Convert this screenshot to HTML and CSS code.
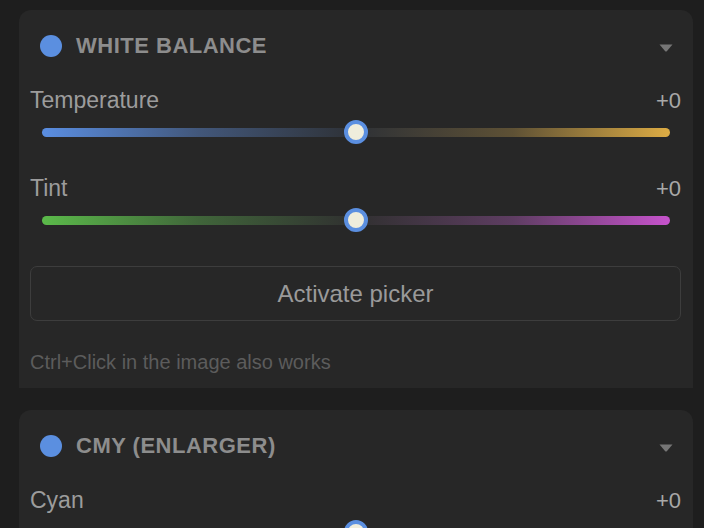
FILE: index.html
```html
<!DOCTYPE html>
<html lang="en">
<head>
<meta charset="utf-8">
<title>Adjustments</title>
<link rel="stylesheet" href="styles.css">
</head>
<body>
<div class="panel">
  <section class="card">
    <header class="card-head">
      <span class="dot"></span>
      <h2 class="card-title">WHITE BALANCE</h2>
      <svg class="chevron" width="14" height="8" viewBox="0 0 14 8"><path d="M0.5 0.5 H13.5 L7.8 7.2 Q7 8 6.2 7.2 Z" fill="#767676"/></svg>
    </header>
    <div class="field">
      <div class="field-row"><span class="label">Temperature</span><span class="value">+0</span></div>
      <div class="slider"><div class="track temp"><span class="thumb"></span></div></div>
    </div>
    <div class="field">
      <div class="field-row"><span class="label">Tint</span><span class="value">+0</span></div>
      <div class="slider"><div class="track tint"><span class="thumb"></span></div></div>
    </div>
    <button class="picker" type="button">Activate picker</button>
    <p class="hint">Ctrl+Click in the image also works</p>
  </section>
  <section class="card">
    <header class="card-head">
      <span class="dot"></span>
      <h2 class="card-title">CMY (ENLARGER)</h2>
      <svg class="chevron" width="14" height="8" viewBox="0 0 14 8"><path d="M0.5 0.5 H13.5 L7.8 7.2 Q7 8 6.2 7.2 Z" fill="#767676"/></svg>
    </header>
    <div class="field">
      <div class="field-row"><span class="label">Cyan</span><span class="value">+0</span></div>
      <div class="slider"><div class="track cyan"><span class="thumb"></span></div></div>
    </div>
  </section>
</div>
</body>
</html>
```
FILE: styles.css
```css
html, body {
  margin: 0;
  height: 100%;
  overflow: hidden;
}

body {
  background: #1e1e1e;
  font-family: "Liberation Sans", Arial, Helvetica, sans-serif;
}

.panel {
  display: flex;
  flex-direction: column;
  gap: 22px;
  padding: 10px 11px 0 19px;
}

.card {
  background: #272727;
  border-radius: 12px 12px 0 0;
  padding: 0 12px 14px 11px;
  display: flex;
  flex-direction: column;
}

.card-head {
  height: 72px;
  display: flex;
  align-items: center;
  padding: 0 8px 0 10px;
}

.dot {
  width: 22px;
  height: 22px;
  border-radius: 50%;
  background: #5b8fe0;
  flex: none;
}

.card-title {
  margin: 0 0 0 14px;
  flex: 1;
  font-size: 22px;
  font-weight: bold;
  letter-spacing: 0.5px;
  color: #8d8d8d;
  line-height: 26px;
}

.chevron {
  display: block;
  margin-top: 3px;
}

.field {
  display: flex;
  flex-direction: column;
  margin-top: 25px;
}

.card-head + .field {
  margin-top: 5px;
}

.field-row {
  display: flex;
  justify-content: space-between;
  align-items: baseline;
  line-height: 26px;
}

.label {
  font-size: 23px;
  color: #9c9c9c;
}

.value {
  font-size: 22px;
  color: #a8a8a8;
}

.slider {
  height: 36px;
  display: flex;
  align-items: center;
  padding: 0 11px 0 12px;
}

.track {
  position: relative;
  flex: 1;
  height: 9px;
  border-radius: 5px;
}

.track.temp {
  background: linear-gradient(to right, #5a8ee2 0%, #42577a 25%, #2e3136 50%, #5e5135 75%, #ddac44 100%);
}

.track.tint {
  background: linear-gradient(to right, #5bba4a 0%, #40653a 25%, #303030 50%, #5e3d62 75%, #c653cc 100%);
}

.track.cyan {
  background: linear-gradient(to right, #c24646 0%, #5e3636 25%, #303030 50%, #305a5a 75%, #45b6b6 100%);
}

.thumb {
  position: absolute;
  left: 50%;
  top: 50%;
  width: 16px;
  height: 16px;
  margin: -12px 0 0 -12px;
  border: 4px solid #5b8fe0;
  border-radius: 50%;
  background: #efeddc;
}

.picker {
  margin-top: 28px;
  height: 55px;
  background: transparent;
  border: 1px solid #3d3d3d;
  border-radius: 7px;
  font-family: inherit;
  font-size: 24px;
  color: #9a9a9a;
  padding: 0;
}

.hint {
  margin: 29px 0 0;
  font-size: 20px;
  line-height: 24px;
  color: #5c5c5c;
}
```
